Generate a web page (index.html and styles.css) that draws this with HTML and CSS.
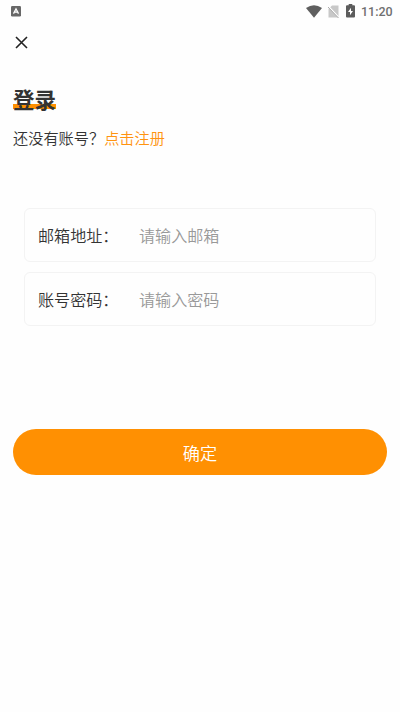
FILE: index.html
```
<!DOCTYPE html>
<html lang="zh-CN">
<head>
<meta charset="utf-8">
<title>登录</title>
<link rel="stylesheet" href="styles.css">
</head>
<body>
<header class="status">
  <svg class="status-app" width="10" height="11" viewBox="0 0 10 11"><rect width="10" height="10.5" rx="1.2" fill="#686868"/><path d="M2.5 7.6 5 2.8 7.5 7.6M3.5 6.2h3" fill="none" stroke="#fff" stroke-width="1.3"/></svg>
  <div class="status-right">
    <svg width="16" height="13" viewBox="0 0 16 13"><path d="M0 3Q8-2.6 16 3L8 12.8Z" fill="#5f5f5f"/></svg>
    <svg class="sim" width="11" height="13" viewBox="0 0 11 13"><path d="M4 .5h6.5v12H.5V4Z" fill="#c8c8c8"/><path d="M0 1 11 12.5" stroke="#fff" stroke-width="1.5"/><path d="M0 2 10.5 13" stroke="#aaa" stroke-width="1"/></svg>
    <svg class="battery" width="9" height="14" viewBox="0 0 9 14"><path d="M2.7 0h3.6v1.3H8q1 0 1 1V12.5q0 1-1 1H1q-1 0-1-1V2.3q0-1 1-1h1.7Z" fill="#5c5c5c"/><path d="M5 3.7 2 8h2v3.2L7 7H5Z" fill="#fff"/></svg>
    <span class="time">11:20</span>
  </div>
</header>
<main class="page">
  <button class="close" aria-label="关闭"><svg width="13" height="13" viewBox="0 0 13 13"><path d="M1 1 12 12M12 1 1 12" stroke="#222" stroke-width="1.6"/></svg></button>
  <h1 class="title">登录</h1>
  <p class="register">还没有账号？<a class="link">点击注册</a></p>
  <form class="form">
    <div class="field"><span class="label">邮箱地址：</span><span class="hint">请输入邮箱</span></div>
    <div class="field"><span class="label">账号密码：</span><span class="hint">请输入密码</span></div>
  </form>
  <button class="submit">确定</button>
</main>
</body>
</html>
```
FILE: styles.css
```
* { box-sizing: border-box; }
body {
  margin: 0;
  height: 712px;
  background: #fefefe;
  color: #333;
  font-family: "Noto Sans CJK SC", sans-serif;
  font-weight: 350;
}
button { border: 0; padding: 0; background: none; font-family: inherit; font-weight: inherit; }
svg { display: block; }
.status {
  display: flex;
  justify-content: space-between;
  height: 22px;
  padding: 0 7px 0 11px;
}
.status-app { margin-top: 6px; }
.status-right { display: flex; align-items: center; }
.sim { margin-left: 6px; }
.battery { margin-left: 7px; }
.time {
  width: 32px;
  margin-left: 6px;
  font: 500 12.5px/22px Roboto, sans-serif;
  color: #707070;
  white-space: nowrap;
  padding-top: 1px;
}
.page { padding: 0 13px; }
.close { display: block; margin: 14px 0 0 2px; }
.title {
  width: 43px;
  height: 32px;
  margin: 34px 0 0;
  font-size: 21.5px;
  line-height: 32px;
  font-weight: 700;
  white-space: nowrap;
  background: linear-gradient(#ff9000, #ff9000) 0 21px / 43px 5px no-repeat;
}
.register { margin: 11px 0 0; font-size: 15.2px; line-height: 22px; }
.link { color: #ff9310; }
.form {
  display: flex;
  flex-direction: column;
  gap: 10px;
  margin: 60px 11px 0;
}
.field {
  display: flex;
  align-items: center;
  height: 54px;
  padding-left: 13px;
  border: 1px solid #f3f3f3;
  border-radius: 6px;
  font-size: 16.1px;
}
.label { width: 101px; }
.hint { color: #999; }
.submit {
  display: block;
  width: 374px;
  height: 46px;
  margin-top: 103px;
  border-radius: 23px;
  background: #ff9002;
  color: #fff;
  font-size: 17.2px;
}
```
